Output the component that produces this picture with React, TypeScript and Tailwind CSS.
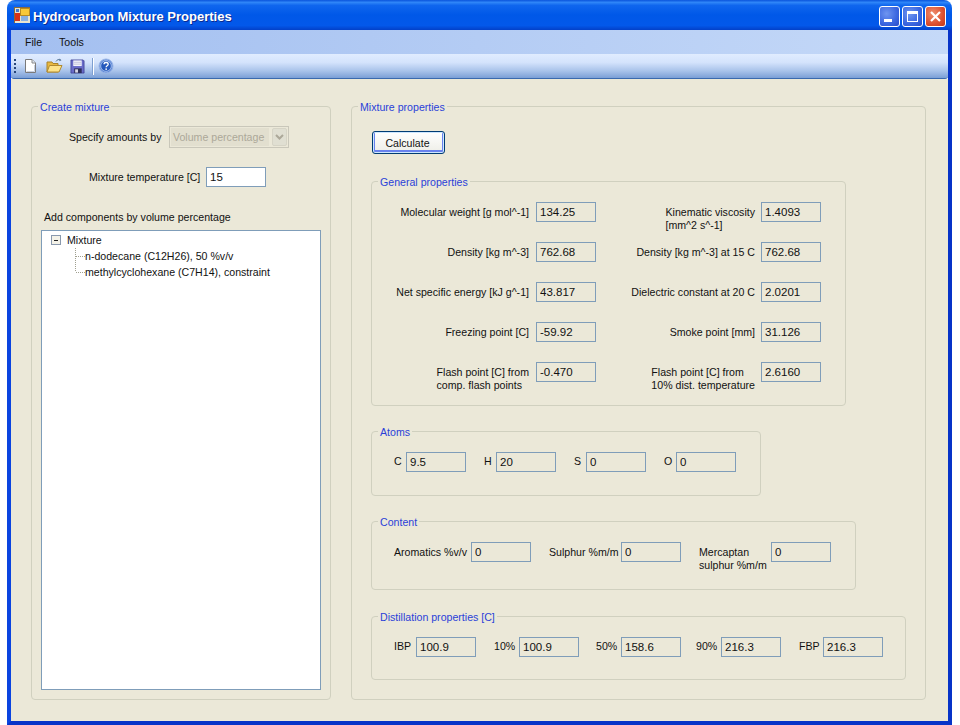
import type { ReactNode } from 'react';

const GroupBox = ({ title, className, children }: { title: string; className: string; children: ReactNode }) => (
  <fieldset className={`border border-[#d0d0bf] rounded-[4px] ${className}`}>
    <legend className="ml-[6px] px-[2px] h-[13px] leading-[15px] text-[#2a3fd8]">{title}</legend>
    {children}
  </fieldset>
);

const Field = ({ value, white }: { value: string; white?: boolean }) => (
  <input
    readOnly
    defaultValue={value}
    className={`w-[60px] h-[20px] shrink-0 border border-[#7f9db9] pl-[3px] pr-0 text-[11.5px] text-[#111] outline-none ${white ? 'bg-white' : 'bg-transparent'}`}
  />
);

const NewIcon = () => (
  <svg width="16" height="16" viewBox="0 0 16 16">
    <path d="M2.500 1.500h6.500l3.500 3.500v9.500h-10z" fill="#fff" stroke="#7a7a7a" />
    <path d="M9 1.500v3.500h3.500" fill="#dfe6f0" stroke="#8a8a8a" />
    <path d="M3.500 13.500h8V7" fill="none" stroke="#c8d0e0" />
  </svg>
);

const OpenIcon = () => (
  <svg width="17" height="16" viewBox="0 0 17 16">
    <path d="M1 14V4h5l1 1.500h5V14z" fill="#e8b840" stroke="#a8822a" />
    <path d="M1 14l2.500-6.500H16L13 14z" fill="#fde38a" stroke="#b08a30" />
    <path d="M10 3.500c1-2 3-2.500 4.500-1.500" fill="none" stroke="#5a7a9a" />
    <path d="M13.500 0.500l2 1.800-2.200 1z" fill="#5a7a9a" />
  </svg>
);

const SaveIcon = () => (
  <svg width="15" height="15" viewBox="0 0 16 16">
    <path d="M1 1h13l1 1v13H1z" fill="#6a6cc8" stroke="#3a3c90" strokeWidth="0.8" />
    <rect x="3.500" y="1.500" width="9" height="6" fill="#f4f4fa" />
    <path d="M4 3.500h8M4 5.500h8" stroke="#c0c0dc" />
    <rect x="4.500" y="10" width="8" height="5" fill="#30305a" />
    <rect x="5.500" y="11" width="3" height="3.500" fill="#d8d8e8" />
  </svg>
);

const HelpIcon = () => (
  <svg width="16" height="16" viewBox="0 0 16 16">
    <circle cx="8" cy="8" r="7" fill="#5c86d8" stroke="#9ab6e6" />
    <circle cx="8" cy="8" r="5.300" fill="#2458bc" stroke="#c6d8f4" strokeWidth="0.7" />
    <path d="M6 6.300c0-2.400 4.200-2.400 4.200 0 0 1.500-2.100 1.500-2.100 3" fill="none" stroke="#fff" strokeWidth="1.300" />
    <rect x="7.400" y="10.400" width="1.500" height="1.500" fill="#fff" />
  </svg>
);

const AppIcon = () => (
  <svg width="16" height="16" viewBox="0 0 16 16" shapeRendering="crispEdges">
    <rect x="0" y="0" width="16" height="16" fill="#e8e4d0" stroke="#8a6a3a" />
    <rect x="1" y="6" width="5" height="8" fill="#d83018" />
    <rect x="6" y="1" width="9" height="7" fill="#f8c838" stroke="#b88a20" />
    <rect x="7" y="9" width="7" height="5" fill="#8ab0e0" />
    <rect x="2" y="2" width="3" height="3" fill="#4878c8" />
  </svg>
);

const CaptionButton = ({ close, children }: { close?: boolean; children: ReactNode }) => (
  <div
    className={`w-[21px] h-[21px] rounded-[3px] border border-white flex items-center justify-center ${
      close
        ? 'bg-[radial-gradient(circle_at_35%_35%,#f09070,#dc5030_60%,#c03818)]'
        : 'bg-[radial-gradient(circle_at_35%_35%,#6f95f0,#3a66e0_60%,#2a4cc8)]'
    }`}
  >
    {children}
  </div>
);

const rowLabel = 'flex justify-end pt-[4px] leading-[13px]';

const General = ({ left, right }: { left: [ReactNode, string]; right: [ReactNode, string] }) => (
  <div className="flex h-[40px]">
    <div className={`w-[157px] ${rowLabel}`}>
      <div>{left[0]}</div>
    </div>
    <div className="ml-[7px]">
      <Field value={left[1]} />
    </div>
    <div className={`w-[159px] ${rowLabel}`}>
      <div>{right[0]}</div>
    </div>
    <div className="ml-[6px]">
      <Field value={right[1]} />
    </div>
  </div>
);

export default function App() {
  return (
    <div className="w-[960px] h-[725px] bg-white overflow-hidden text-[10.6px] text-[#111] font-['Liberation_Sans',Arial,sans-serif]">
      <div className="ml-[7px] w-[945px] h-[725px] flex flex-col">
        {/* Title bar */}
        <div className="h-[30px] shrink-0 rounded-t-[8px] flex items-center pl-[7px] pr-[6px] bg-[linear-gradient(to_bottom,#0a54dc_0%,#2f86f8_8%,#0f66ee_18%,#0058e8_50%,#0358ea_85%,#0340c8_100%)]">
          <AppIcon />
          <span className="ml-[3px] pt-[3px] text-white font-bold text-[13px] [text-shadow:1px_1px_0_#0a2a90]">
            Hydrocarbon Mixture Properties
          </span>
          <div className="ml-auto flex gap-[2px] pt-[3px]">
            <CaptionButton>
              <div className="w-[8px] h-[3px] bg-white mt-[8px] mr-[4px]" />
            </CaptionButton>
            <CaptionButton>
              <div className="w-[11px] h-[11px] border border-white border-t-[3px]" />
            </CaptionButton>
            <CaptionButton close>
              <svg width="13" height="13" viewBox="0 0 13 13">
                <path d="M2 2l9 9M11 2l-9 9" stroke="#fff" strokeWidth="2.200" />
              </svg>
            </CaptionButton>
          </div>
        </div>

        <div className="flex-1 min-h-0 flex flex-col border-l-4 border-r-4 border-b-4 border-l-[#0a44e0] border-r-[#0733c8] border-b-[#0733c8]">
          {/* Menu */}
          <div className="h-[24px] shrink-0 flex items-center pl-[14px] pt-[1px] gap-[17px] bg-[linear-gradient(to_right,#a3bff0,#c5d9f8)]">
            <span>File</span>
            <span>Tools</span>
          </div>

          {/* Toolbar */}
          <div className="h-[25px] shrink-0 flex items-center pl-[3px] rounded-b-[3px] border-b border-[#3a69ae] bg-[linear-gradient(to_bottom,#e0ecff_0%,#d4e3fc_35%,#a9c3ea_70%,#7b9fd6_100%)]">
            <div className="w-[2px] h-[15px] mr-[7px] bg-[repeating-linear-gradient(to_bottom,#27457a_0,#27457a_2px,transparent_2px,transparent_4px)]" />
            <NewIcon />
            <div className="ml-[7px]">
              <OpenIcon />
            </div>
            <div className="ml-[7px]">
              <SaveIcon />
            </div>
            <div className="w-px h-[17px] ml-[7px] mr-[4px] bg-[#7d9fd0] border-r border-white box-content" />
            <HelpIcon />
          </div>

          {/* Form */}
          <div className="flex-1 min-h-0 flex gap-[20px] bg-[#ebe8d8] pl-[20px] pt-[21px]">
            <GroupBox title="Create mixture" className="w-[300px] h-[600px] shrink-0">
              <div className="flex items-center mt-[13px] ml-[37px] gap-[8px]">
                <span className="w-[92px] pt-[1px] whitespace-nowrap">Specify amounts by</span>
                <div className="w-[120px] h-[22px] border border-[#c9c7ba] flex items-center p-[1px]">
                  <div className="flex-1 h-full bg-[#e2dfcf] text-[#aca899] pl-[2px] leading-[18px]">Volume percentage</div>
                  <div className="w-[15px] h-full ml-[3px] rounded-[2px] bg-[#e0dfd2] border border-[#d6d4c6] flex items-center justify-center">
                    <svg width="9" height="7" viewBox="0 0 9 7">
                      <path d="M1 1l3.500 3.500L8 1" fill="none" stroke="#aca899" strokeWidth="2" />
                    </svg>
                  </div>
                </div>
              </div>
              <div className="flex items-center mt-[19px] ml-[57px] gap-[7px]">
                <span className="w-[110px] pt-[1px] whitespace-nowrap">Mixture temperature [C]</span>
                <Field value="15" white />
              </div>
              <div className="mt-[24px] ml-[12px] leading-[13px]">Add components by volume percentage</div>
              <div className="relative mt-[6px] ml-[9px] w-[280px] h-[460px] bg-white border border-[#7f9db9] pt-[1px] leading-[16px]">
                <svg width="50" height="45" viewBox="0 0 50 45" className="absolute left-[8px] top-[3px]" shapeRendering="crispEdges">
                  <rect x="1.500" y="1.500" width="9" height="9" fill="#f4f2e8" stroke="#8a99ad" />
                  <path d="M4 6h4" stroke="#222" />
                  <path d="M25.500 14v24M26 22h9M26 38h9" stroke="#a0a090" strokeDasharray="1 1" />
                </svg>
                <div className="pl-[25px]">Mixture</div>
                <div className="pl-[43px]">n-dodecane (C12H26), 50 %v/v</div>
                <div className="pl-[43px]">methylcyclohexane (C7H14), constraint</div>
              </div>
            </GroupBox>

            <GroupBox title="Mixture properties" className="w-[575px] h-[600px] shrink-0">
              <button className="block mt-[18px] ml-[20px] w-[73px] h-[23px] pt-[2px] pr-[2px] rounded-[3px] border border-[#003c74] bg-[linear-gradient(to_bottom,#ffffff,#f0f0ea_85%,#dcd8cc)] shadow-[inset_0_0_0_1px_#cee7ff,inset_0_-1px_0_2px_#6982ee]">
                Calculate
              </button>

              <GroupBox title="General properties" className="mt-[21px] ml-[19px] w-[475px] h-[231px]">
                <div className="mt-[14px]">
                  <General left={['Molecular weight [g mol^-1]', '134.25']} right={[<>Kinematic viscosity<br />[mm^2 s^-1]</>, '1.4093']} />
                  <General left={['Density [kg m^-3]', '762.68']} right={['Density [kg m^-3] at 15 C', '762.68']} />
                  <General left={['Net specific energy [kJ g^-1]', '43.817']} right={['Dielectric constant at 20 C', '2.0201']} />
                  <General left={['Freezing point [C]', '-59.92']} right={['Smoke point [mm]', '31.126']} />
                  <General left={[<>Flash point [C] from<br />comp. flash points</>, '-0.470']} right={[<>Flash point [C] from<br />10% dist. temperature</>, '2.6160']} />
                </div>
              </GroupBox>

              <GroupBox title="Atoms" className="mt-[19px] ml-[19px] w-[390px] h-[71px]">
                <div className="flex mt-[14px] ml-[22px] gap-[18px]">
                  {[['C', '9.5'], ['H', '20'], ['S', '0'], ['O', '0']].map(([k, v]) => (
                    <div key={k} className="flex items-center w-[72px]">
                      <span className="w-[12px]">{k}</span>
                      <Field value={v} />
                    </div>
                  ))}
                </div>
              </GroupBox>

              <GroupBox title="Content" className="mt-[19px] ml-[19px] w-[485px] h-[75px]">
                <div className="flex mt-[14px] ml-[22px] leading-[13px]">
                  <div className="w-[155px] flex">
                    <span className="w-[77px] pt-[4px] whitespace-nowrap">Aromatics %v/v</span>
                    <Field value="0" />
                  </div>
                  <div className="w-[150px] flex">
                    <span className="w-[72px] pt-[4px] whitespace-nowrap">Sulphur %m/m</span>
                    <Field value="0" />
                  </div>
                  <div className="flex">
                    <span className="w-[72px] pt-[4px] whitespace-nowrap">Mercaptan<br />sulphur %m/m</span>
                    <Field value="0" />
                  </div>
                </div>
              </GroupBox>

              <GroupBox title="Distillation properties [C]" className="mt-[20px] ml-[19px] w-[535px] h-[70px]">
                <div className="flex mt-[14px] ml-[22px]">
                  {[['IBP', '100.9', 22, 100], ['10%', '100.9', 25, 102], ['50%', '158.6', 25, 100], ['90%', '216.3', 25, 103], ['FBP', '216.3', 24, 84]].map(([k, v, w, t]) => (
                    <div key={k as string} className="flex items-center shrink-0" style={{ width: t as number }}>
                      <span className="shrink-0" style={{ width: w as number }}>{k}</span>
                      <Field value={v as string} />
                    </div>
                  ))}
                </div>
              </GroupBox>
            </GroupBox>
          </div>
        </div>
      </div>
    </div>
  );
}
